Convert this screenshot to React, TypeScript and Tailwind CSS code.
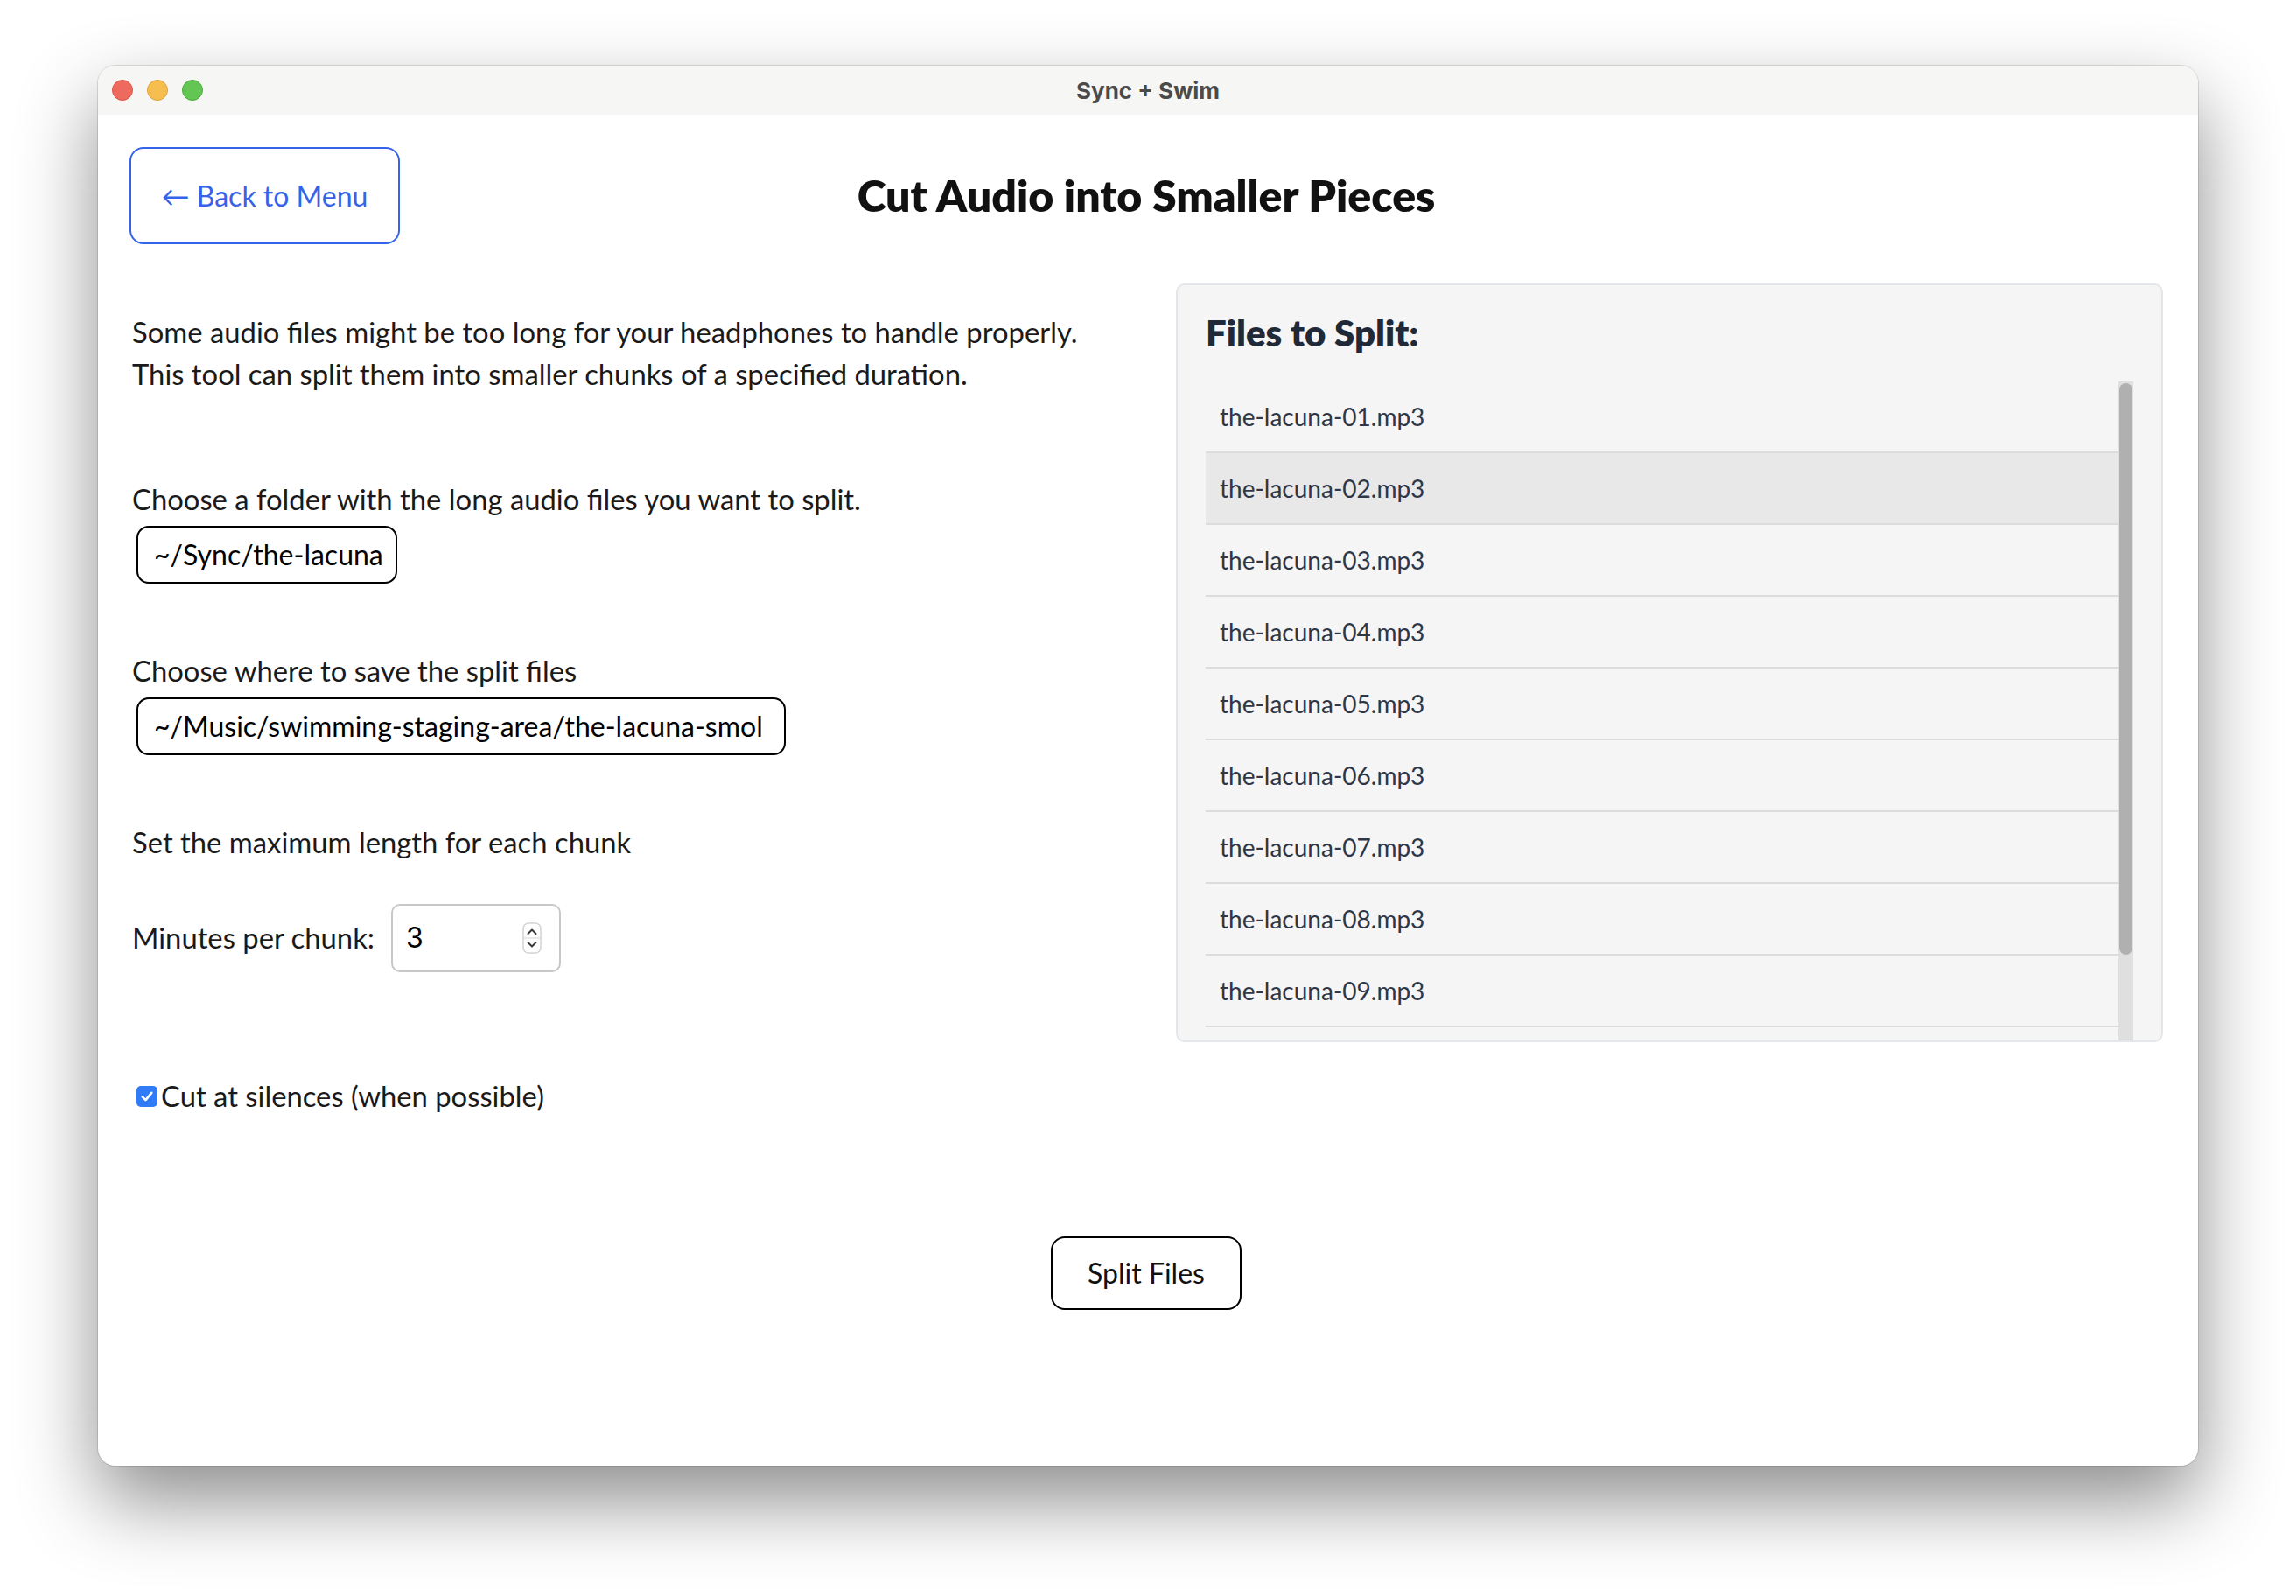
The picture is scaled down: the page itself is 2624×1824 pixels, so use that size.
import React from "react"

const files = Array.from({ length: 10 }, (_, i) => `the-lacuna-${String(i + 1).padStart(2, "0")}.mp3`)

function TrafficLights() {
  return (
    <div className="absolute left-[16px] top-[16px] flex gap-[16px]">
      <span className="w-[24px] h-[24px] rounded-full bg-[#ee6a5f] border border-[#d9564b]" />
      <span className="w-[24px] h-[24px] rounded-full bg-[#f5be4f] border border-[#d9a23f]" />
      <span className="w-[24px] h-[24px] rounded-full bg-[#62c554] border border-[#4fa93f]" />
    </div>
  )
}

function Spinner() {
  return (
    <svg width="22" height="36" viewBox="0 0 22 36" className="shrink-0">
      <rect x="1" y="1" width="20" height="34" rx="6" fill="#fff" stroke="#d4d4d4" strokeWidth="1.5" />
      <line x1="2" y1="18" x2="20" y2="18" stroke="#e2e2e2" strokeWidth="1.5" />
      <path d="M6.5 13 L11 8.5 L15.5 13" fill="none" stroke="#3a3a3a" strokeWidth="2" strokeLinecap="round" strokeLinejoin="round" />
      <path d="M6.5 23 L11 27.5 L15.5 23" fill="none" stroke="#3a3a3a" strokeWidth="2" strokeLinecap="round" strokeLinejoin="round" />
    </svg>
  )
}

function FilesPanel() {
  return (
    <div className="h-[867px] flex flex-col border-2 border-[#e3e6ea] rounded-[10px] bg-[#f5f5f5] pt-[30px] px-[32px] overflow-hidden">
      <h2 className="text-[42px] leading-[48px] font-extrabold text-[#1f2937] mb-[32px]">Files to Split:</h2>
      <div className="flex-1 min-h-0 flex">
        <ul className="flex-1 overflow-hidden">
          {files.map((name, i) => (
            <li
              key={name}
              className={`h-[82px] border-b-2 border-[#dcdcdc] pl-[16px] flex items-center text-[28px] text-[#2d3748] ${
                i === 1 ? "bg-[#e8e8e8]" : ""
              }`}
            >
              {name}
            </li>
          ))}
        </ul>
        <div className="w-[17px] bg-[#dfdfdf]">
          <div className="h-[653px] mt-[2px] mx-[1px] rounded-full bg-[#b0b0b0]" />
        </div>
      </div>
    </div>
  )
}

export default function App() {
  return (
    <div className="w-[2624px] h-[1824px] bg-white pl-[112px] pt-[75px] font-['Lato','Noto_Sans',sans-serif]">
      <div className="w-[2400px] h-[1600px] rounded-[20px] bg-white overflow-hidden flex flex-col shadow-[0_40px_90px_rgba(0,0,0,0.45),0_0_0_1px_rgba(0,0,0,0.12)]">
        <div className="relative h-[56px] shrink-0 bg-[#f6f6f4] flex items-center justify-center">
          <TrafficLights />
          <span className="font-['Inter',sans-serif] font-bold text-[26px] text-[#4b4b4b]">Sync + Swim</span>
        </div>

        <div className="flex-1 pl-[36px] pr-[40px] pt-[37px]">
          <div className="grid grid-cols-[1fr_auto_1fr] items-center">
            <button className="justify-self-start w-[309px] h-[111px] border-2 border-[#3563e9] rounded-[16px] text-[32px] text-[#3563e9] flex items-center justify-center">
              ← Back to Menu
            </button>
            <h1 className="text-[50px] font-extrabold text-[#111111]">Cut Audio into Smaller Pieces</h1>
            <div />
          </div>

          <div className="grid grid-cols-2 gap-x-[68px] mt-[45px] items-start">
            <div className="flex flex-col items-start pt-[32px] pl-[3px] text-[32.8px] leading-[48px] text-[#1a1a1a]">
              <p>
                Some audio files might be too long for your headphones to handle properly.
                <br />
                This tool can split them into smaller chunks of a specified duration.
              </p>

              <p className="mt-[95px]">Choose a folder with the long audio files you want to split.</p>
              <button className="mt-[6px] ml-[5px] w-[298px] h-[66px] border-2 border-black rounded-[14px] pl-[18px] flex items-center text-[32px] text-black">
                ~/Sync/the-lacuna
              </button>

              <p className="mt-[76px]">Choose where to save the split files</p>
              <button className="mt-[6px] ml-[5px] w-[742px] h-[66px] border-2 border-black rounded-[14px] pl-[18px] flex items-center text-[32px] text-black">
                ~/Music/swimming-staging-area/the-lacuna-smol
              </button>

              <p className="mt-[76px]">Set the maximum length for each chunk</p>

              <div className="mt-[46px] flex items-center gap-[19px]">
                <span>Minutes per chunk:</span>
                <div className="w-[194px] h-[78px] border-2 border-[#c8c8c8] rounded-[10px] bg-white pl-[15px] pr-[20px] flex items-center justify-between">
                  <span className="font-['Inter',sans-serif] text-[32px] text-black">3</span>
                  <Spinner />
                </div>
              </div>

              <label className="mt-[118px] ml-[5px] flex items-center gap-[4px]">
                <span className="w-[24px] h-[24px] rounded-[5px] bg-[#2f7cf6] flex items-center justify-center">
                  <svg width="18" height="18" viewBox="0 0 24 24">
                    <path d="M5 12.5 L10 17.5 L19 6.5" fill="none" stroke="#fff" strokeWidth="3.5" strokeLinecap="round" strokeLinejoin="round" />
                  </svg>
                </span>
                <span>Cut at silences (when possible)</span>
              </label>
            </div>

            <FilesPanel />
          </div>

          <div className="flex justify-center mt-[136px]">
            <button className="w-[218px] h-[84px] border-2 border-black rounded-[16px] text-[32px] text-[#111111]">
              Split Files
            </button>
          </div>
        </div>
      </div>
    </div>
  )
}
